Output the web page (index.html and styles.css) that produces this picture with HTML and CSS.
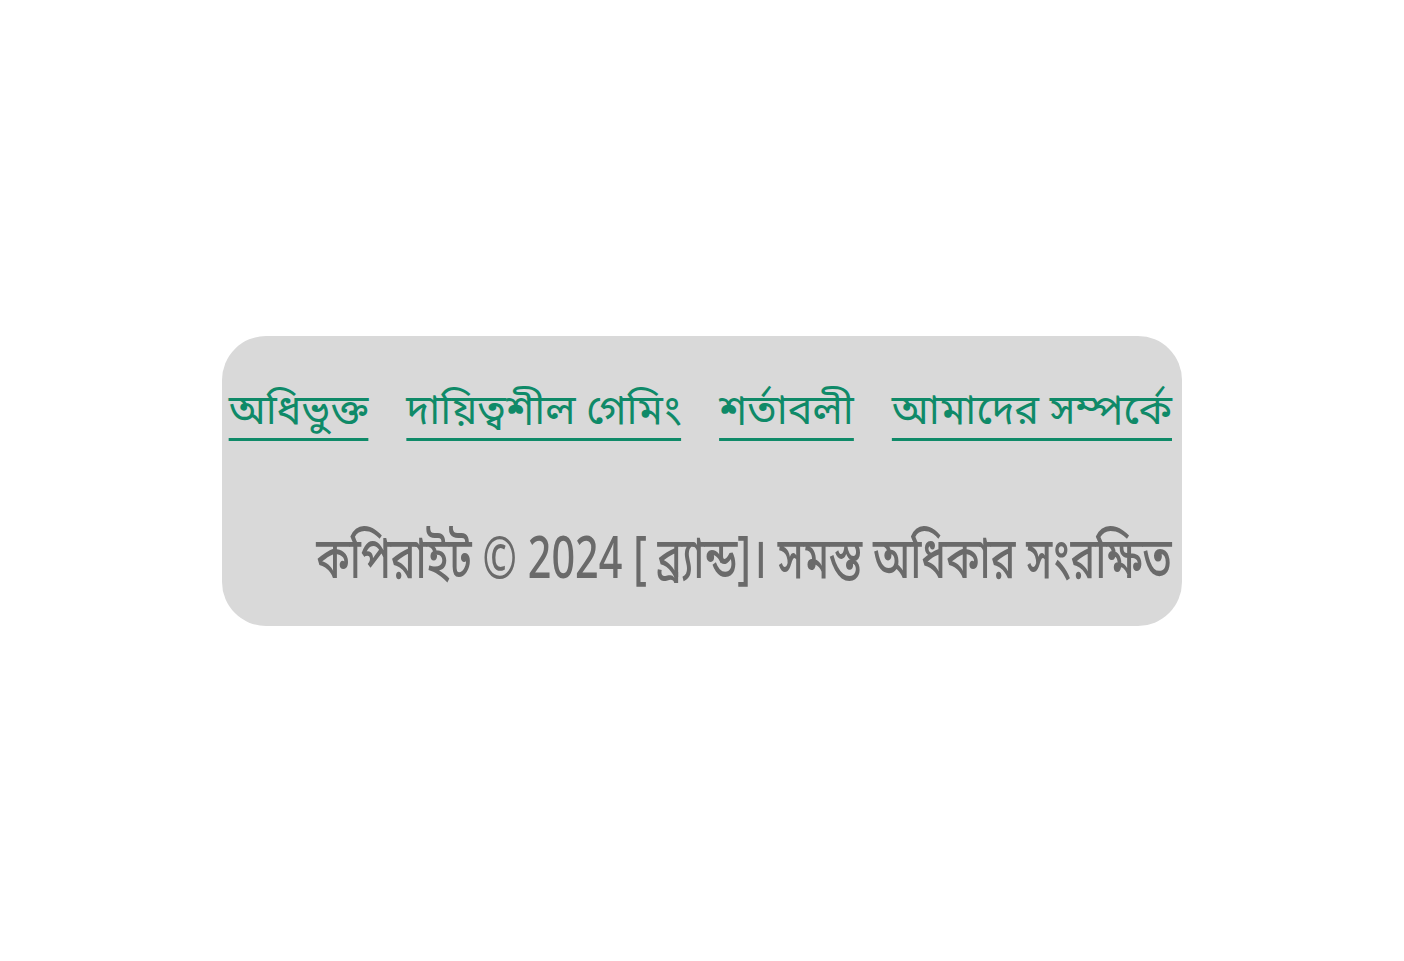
FILE: index.html
```html
<!DOCTYPE html>
<html lang="bn">
<head>
<meta charset="utf-8">
<link rel="stylesheet" href="styles.css">
</head>
<body>
<div class="page">
  <footer class="panel">
    <nav class="links">
      <a href="#">অধিভুক্ত</a>
      <a href="#">দায়িত্বশীল গেমিং</a>
      <a href="#">শর্তাবলী</a>
      <a href="#">আমাদের সম্পর্কে</a>
    </nav>
    <div class="copy-row">
      <p class="copy">কপিরাইট © 2024 [ ব্র্যান্ড]। সমস্ত অধিকার সংরক্ষিত</p>
    </div>
  </footer>
</div>
</body>
</html>
```
FILE: styles.css
```css
html, body { margin: 0; padding: 0; background: #ffffff; }
.page {
  width: 1404px;
  height: 961px;
  display: flex;
  align-items: center;
  justify-content: center;
}
.panel {
  width: 960px;
  height: 290px;
  box-sizing: border-box;
  background: #d9d9d9;
  border-radius: 44px;
  padding: 44px 10px 0 8px;
  display: flex;
  flex-direction: column;
  align-items: stretch;
  font-family: "Noto Sans", "Noto Sans Bengali", "Lohit Bengali", sans-serif;
}
.links {
  display: flex;
  justify-content: flex-end;
  gap: 38px;
  white-space: nowrap;
}
.links a {
  color: #0f8a68;
  font-size: 41.5px;
  line-height: 56px;
  text-decoration: underline;
  text-decoration-thickness: 3px;
  text-underline-offset: 14px;
}
.copy-row {
  display: flex;
  justify-content: flex-end;
  margin-top: 90px;
}
.copy {
  margin: 0;
  flex: none;
  white-space: nowrap;
  color: #6a6a6a;
  font-size: 58px;
  line-height: 60px;
  font-weight: 500;
  transform: scaleX(0.713);
  transform-origin: right center;
}
```
